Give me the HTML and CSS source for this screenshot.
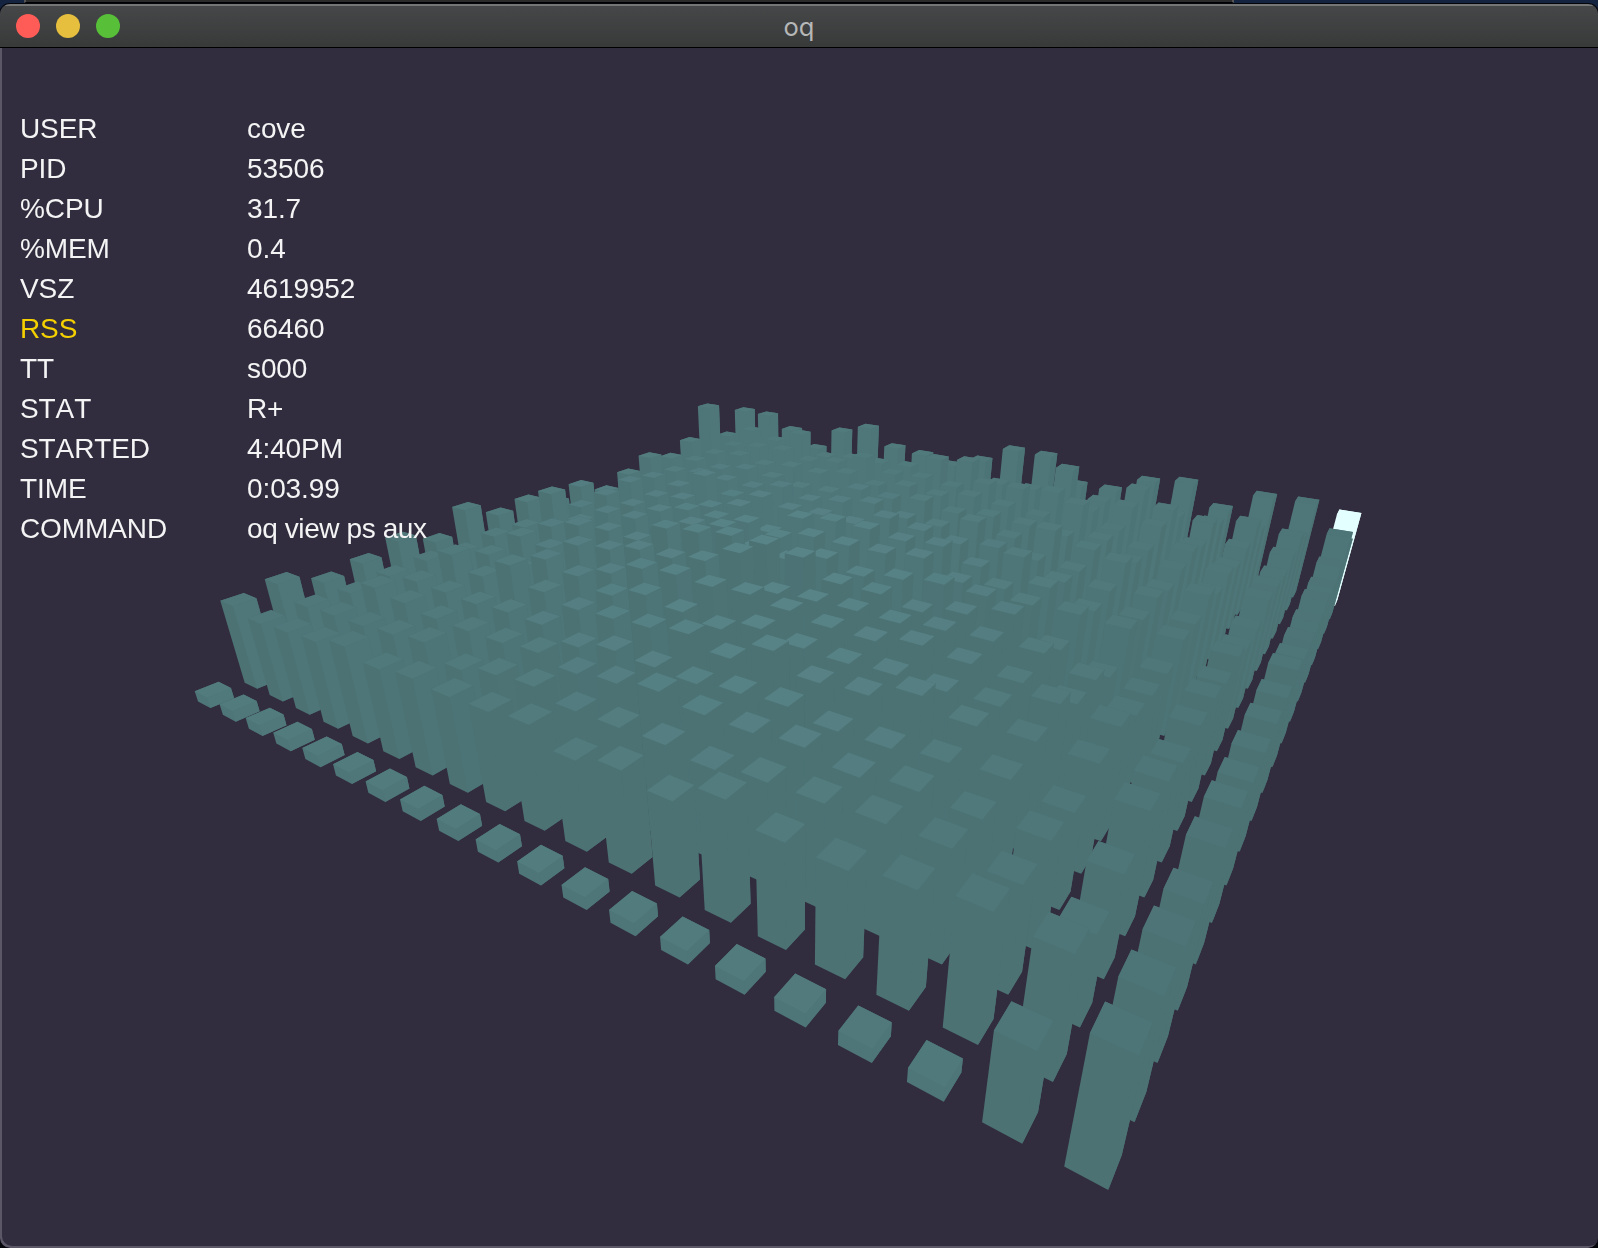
FILE: index.html
```html
<!DOCTYPE html>
<html lang="en">
<head>
<meta charset="utf-8">
<title>oq</title>
<link rel="stylesheet" href="styles.css">
</head>
<body>
<div class="desktop"><div class="backdrop"></div></div>
<main class="window">
  <header class="titlebar">
    <div class="lights">
      <span class="light close"></span>
      <span class="light minimize"></span>
      <span class="light zoom"></span>
    </div>
    <h1 class="title">oq</h1>
  </header>
  <section class="view">
    <canvas class="scene" id="scene" width="1598" height="1200"></canvas>
    <dl class="record">
      <dt>USER</dt><dd>cove</dd>
      <dt>PID</dt><dd>53506</dd>
      <dt>%CPU</dt><dd>31.7</dd>
      <dt>%MEM</dt><dd>0.4</dd>
      <dt>VSZ</dt><dd>4619952</dd>
      <dt class="active">RSS</dt><dd>66460</dd>
      <dt>TT</dt><dd>s000</dd>
      <dt>STAT</dt><dd>R+</dd>
      <dt>STARTED</dt><dd>4:40PM</dd>
      <dt>TIME</dt><dd>0:03.99</dd>
      <dt>COMMAND</dt><dd class="command">oq view ps aux</dd>
    </dl>
  </section>
</main>
<script src="scene.js"></script>
</body>
</html>
```
FILE: styles.css
```css
* { box-sizing: border-box; }

body {
  margin: 0;
  width: 1598px;
  height: 1248px;
  overflow: hidden;
  background: #05060c;
  display: grid;
  font-family: "Liberation Sans", Arial, Helvetica, sans-serif;
}

.desktop, .window { grid-area: 1 / 1; }

.desktop {
  height: 30px;
  padding-left: 24px;
  background: #14233f;
}

.backdrop {
  width: 1210px;
  height: 3px;
  background: #2b2b2c;
  border-left: 2px solid #555;
  border-right: 2px solid #555;
  border-bottom: 1px solid #000;
}

.window {
  margin-top: 4px;
  height: 1244px;
  display: flex;
  flex-direction: column;
  border-radius: 10px;
  overflow: hidden;
  background: #312d3e;
  box-shadow: 0 0 0 1px #05060c;
}

.titlebar {
  height: 44px;
  flex: none;
  display: grid;
  grid-template-columns: 1fr auto 1fr;
  align-items: center;
  padding: 0 16px 2px;
  background: linear-gradient(#464748, #383939);
  border-top: 2px solid #757676;
  border-bottom: 1px solid #000;
}

.lights { display: flex; gap: 16px; }
.light { width: 24px; height: 24px; border-radius: 50%; }
.close { background: #ff5c57; }
.minimize { background: #e5bf3d; }
.zoom { background: #57c038; }

.title {
  margin: 3px 0 0;
  font: 400 25.5px/30px Inter, "Liberation Sans", sans-serif;
  color: #b6b7b7;
}

.view {
  flex: 1;
  display: grid;
  box-shadow: inset 2px -2px 0 #5b5767;
  border-radius: 0 0 10px 10px;
}

.scene, .record { grid-area: 1 / 1; }
.scene { display: block; }

.record {
  margin: 0;
  padding: 61px 0 0 20px;
  display: grid;
  grid-template-columns: 227px max-content;
  grid-auto-rows: 40px;
  align-content: start;
  z-index: 1;
  font-size: 28px;
  line-height: 40px;
  letter-spacing: -0.1px;
  font-kerning: none;
  color: #f4f4f5;
}

.record dt, .record dd { margin: 0; }
.record .active { color: #f5d000; }
.record .command { letter-spacing: -0.4px; }
```
FILE: scene.js
```
// Bar heights in hundredths of a cell, one line per row, nearest row first.
const HEIGHTS = [
  [25, 25, 25, 25, 25, 25, 25, 25, 25, 25, 25, 25, 25, 25, 25, 25, 25, 25, 152, 211],
  [197, 182, 189, 195, 213, 194, 205, 199, 202, 211, 179, 198, 181, 224, 193, 191, 207, 222, 210, 204],
  [212, 182, 188, 190, 198, 208, 178, 197, 204, 187, 188, 190, 180, 195, 197, 203, 205, 191, 160, 195],
  [180, 178, 215, 204, 193, 192, 193, 200, 185, 195, 210, 196, 195, 203, 185, 198, 190, 196, 185, 185],
  [194, 185, 194, 192, 189, 195, 193, 170, 190, 184, 179, 190, 196, 181, 183, 193, 200, 181, 225, 206],
  [218, 190, 226, 195, 244, 205, 188, 193, 199, 212, 188, 232, 196, 202, 233, 208, 214, 210, 216, 209],
  [185, 180, 194, 180, 225, 207, 185, 210, 196, 183, 210, 195, 191, 197, 194, 196, 233, 224, 193, 195],
  [241, 190, 210, 200, 228, 180, 214, 222, 217, 223, 211, 199, 197, 215, 205, 196, 185, 195, 209, 193],
  [199, 185, 206, 229, 186, 207, 207, 222, 262, 189, 195, 198, 196, 206, 210, 213, 187, 186, 213, 196],
  [209, 249, 190, 186, 180, 231, 240, 252, 251, 241, 200, 200, 183, 203, 228, 178, 148, 185, 195, 197],
  [180, 185, 187, 190, 180, 211, 224, 190, 180, 206, 184, 199, 211, 207, 211, 215, 210, 213, 206, 207],
  [201, 193, 180, 182, 204, 200, 207, 187, 209, 207, 208, 218, 180, 188, 215, 185, 191, 207, 179, 187],
  [160, 206, 180, 190, 185, 206, 151, 209, 220, 219, 208, 215, 185, 231, 193, 195, 203, 233, 182, 182],
  [189, 195, 185, 233, 190, 205, 187, 190, 185, 219, 205, 190, 201, 190, 185, 228, 185, 200, 211, 184],
  [218, 190, 200, 195, 190, 208, 185, 199, 213, 190, 187, 218, 195, 235, 206, 195, 199, 213, 205, 195],
  [194, 200, 190, 205, 195, 181, 184, 209, 200, 212, 195, 205, 200, 190, 200, 195, 212, 195, 195, 190],
  [225, 200, 210, 195, 205, 200, 215, 195, 210, 200, 215, 205, 195, 245, 195, 225, 195, 210, 210, 207],
  [318, 205, 215, 220, 200, 210, 240, 205, 210, 200, 225, 228, 235, 200, 230, 240, 224, 241, 227, 247],
  [203, 235, 215, 250, 190, 200, 200, 205, 242, 250, 200, 200, 273, 200, 249, 195, 195, 195, 195, 200],
  [269, 267, 229, 181, 250, 276, 226, 218, 200, 230, 276, 274, 204, 205, 247, 260, 203, 254, 256, 239],
];
const SELECTED = { u: 19, v: 19 };
const FOOT = 0.5;
const LIGHT = { u: 9, v: 8.5, h: 3.4 };
const TITLEBAR = 48;

const ctx = document.getElementById('scene').getContext('2d');

// Perspective camera: 65 degree field of view, pitched 26.5 degrees down.
function project([u, v, h]) {
  const d = 1 - 0.02503 * u + 0.03757 * v - 0.02247 * h;
  return [
    (210.3 + 19.52 * u + 56.41 * v - 17.954 * h) / d,
    (708 - 4.416 * u + 6.65 * v - 57.119 * h) / d - TITLEBAR,
  ];
}

function face(points, color) {
  ctx.fillStyle = color;
  ctx.beginPath();
  points.forEach((p, i) => {
    const [x, y] = project(p);
    if (i) ctx.lineTo(x, y); else ctx.moveTo(x, y);
  });
  ctx.closePath();
  ctx.fill();
}

function tint(amount) {
  const k = Math.max(0, amount);
  return `rgb(${75.5 + 14 * k},${113.5 + 20 * k},${115.5 + 22 * k})`;
}

function bar(u, v, h) {
  const l = u - FOOT, b = v + FOOT;
  const chosen = u === SELECTED.u && v === SELECTED.v;
  const du = LIGHT.u - u, dv = v - LIGHT.v;
  const dist = Math.hypot(du, dv, 3);
  const [sx, sy] = project([u - 0.25, v + 0.25, h]);
  const glow = Math.exp(-(((sx - 775) / 260) ** 2) - ((sy - 540) / 210) ** 2);
  const small = h < 1 ? 0.15 : 0;
  // Distant rows and the outer right columns lose contrast between top and sides.
  const far = Math.min(1, Math.max(0, (v - 12) / 5));
  const edge = Math.min(1, Math.max(0, (u - 14) / 5));
  const left = chosen ? '#e4ffff' : tint(Math.max(0, dv / dist) * 0.29 + small);
  const right = chosen ? '#e4ffff' : tint(Math.max(0, du / dist) * 0.29 + small + 0.07 * far * (1 - edge));
  const top = chosen ? '#e4ffff' : tint(0.3 - 0.16 * edge + 0.6 * glow * (1 - 0.65 * far) + small);
  face([[l, v, 0], [u, v, 0], [u, b, 0], [u, b, h], [l, b, h], [l, v, h]], left);
  face([[u, v, 0], [u, b, 0], [u, b, h], [u, v, h]], right);
  face([[l, v, h], [u, v, h], [u, b, h], [l, b, h]], top);
}

for (let v = HEIGHTS.length - 1; v >= 0; v--) {
  HEIGHTS[v].forEach((h, u) => bar(u, v, h / 100));
}
```
